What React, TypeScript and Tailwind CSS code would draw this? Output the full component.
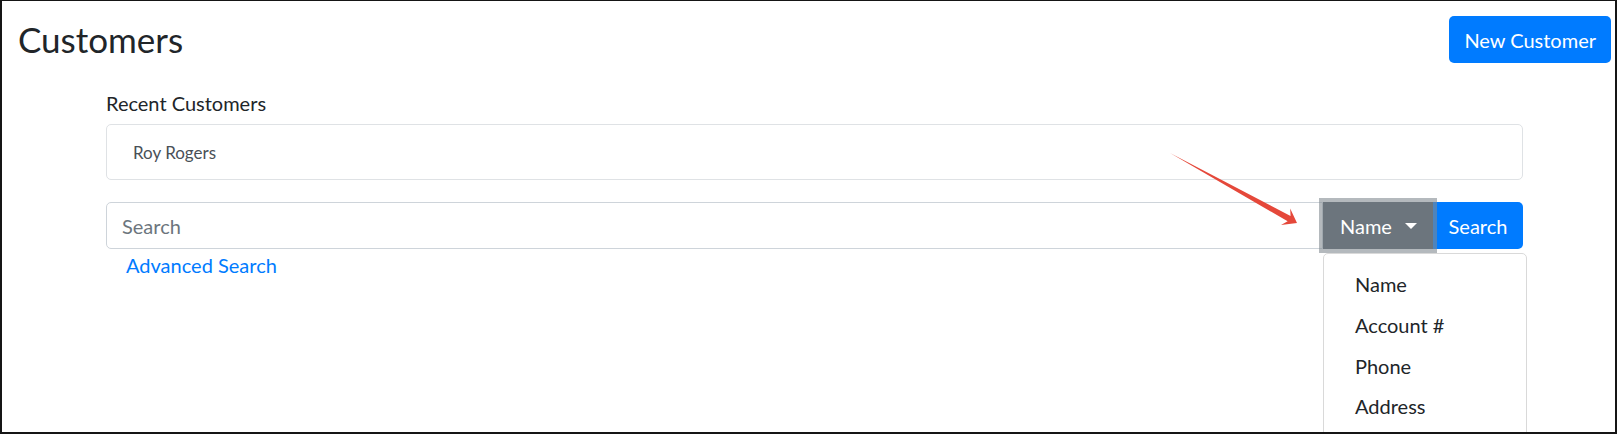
export default function App() {
  return (
    <div className="relative w-[1617px] h-[434px] overflow-hidden bg-white border-2 border-t border-[#151515] text-[#212529] font-['Lato','Liberation_Sans',sans-serif]">
      <div className="flex items-start justify-between pl-[16px] pr-[4px] pt-[15px]">
        <h1 className="mt-[2px] text-[35px] leading-[42px] font-normal">Customers</h1>
        <button className="h-[47px] rounded-[5px] bg-[#007bff] px-[15px] text-[20px] leading-[30px] text-white">
          New Customer
        </button>
      </div>
      <div className="relative ml-[104px] w-[1417px]">
        <div className="mt-[25px] text-[20px] leading-[30px]">Recent Customers</div>
        <div className="mt-[6px] h-[56px] rounded-[5px] border border-[#dfe2e5] pl-[26px] pt-[16px] text-[17px] leading-[24px] text-[#495057]">
          Roy Rogers
        </div>
        <div className="relative mt-[22px] flex h-[47px]">
          <div className="flex flex-1 items-center rounded-l-[5px] border border-[#ced4da] pl-[15px] text-[20px] leading-[30px] text-[#6c757d]">
            Search
          </div>
          <button className="relative z-10 flex w-[110px] items-center bg-[#6c757d] pl-[17px] text-[20px] leading-[30px] text-white shadow-[0_0_0_4px_rgba(130,138,145,0.6)]">
            Name
            <span className="ml-[13px] h-0 w-0 border-x-[6px] border-t-[6px] border-x-transparent border-t-white" />
          </button>
          <button className="w-[90px] rounded-r-[5px] bg-[#007bff] text-[20px] leading-[30px] text-white">Search</button>
          <div className="absolute left-[1217px] top-[51px] z-20 h-[220px] w-[204px] rounded-[5px] border border-[#d9d9d9] bg-white pt-[10px] text-[20px] leading-[30px] text-[#212529]">
            <div className="px-[31px] py-[5.33px]">Name</div>
            <div className="px-[31px] py-[5.33px]">Account #</div>
            <div className="px-[31px] py-[5.33px]">Phone</div>
            <div className="px-[31px] py-[5.33px]">Address</div>
          </div>
        </div>
        <div className="ml-[20px] mt-[1px] text-[20px] leading-[30px] text-[#007bff]">Advanced Search</div>
      </div>
      <svg className="pointer-events-none absolute left-[-2px] top-[-1px] z-30" width="1617" height="434" viewBox="0 0 1617 434">
        <g transform="translate(1170 153) rotate(28.86)">
          <polygon points="0,0 136,-3 132,-9.5 145,0 132,9.5 136,3" fill="#e5483a" />
        </g>
      </svg>
    </div>
  );
}
